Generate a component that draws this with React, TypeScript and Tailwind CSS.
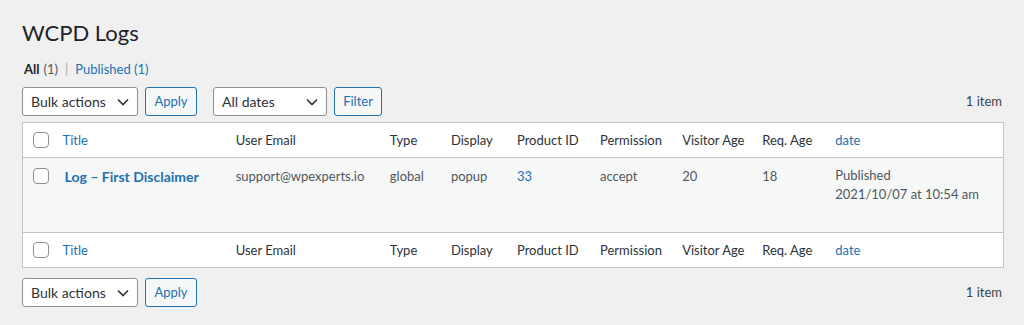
import React from "react";

const Chevron = () => (
  <svg width="12" height="8" viewBox="0 0 12 8" className="absolute right-[8px] top-1/2 -translate-y-1/2">
    <path d="M1 1.5l5 5 5-5" fill="none" stroke="#2c3338" strokeWidth="1.6" />
  </svg>
);

const Select = ({ label, w }: { label: string; w: string }) => (
  <div className={`relative h-[29px] ${w} rounded-[3px] border border-[#8c8f94] bg-white pl-[8px] flex items-center text-[14px] text-[#2c3338]`}>
    {label}
    <Chevron />
  </div>
);

const Btn = ({ label, w }: { label: string; w: string }) => (
  <div className={`h-[29px] ${w} rounded-[3px] border border-[#2271b1] bg-[#f6f7f7] flex items-center justify-center text-[13px] text-[#2271b1]`}>
    {label}
  </div>
);

const Check = () => (
  <div className="w-[16px] h-[16px] rounded-[4px] border border-[#8c8f94] bg-white" />
);

const HeadRow = () => (
  <tr className="h-[35px] bg-white text-[#2c3338] text-[13px] whitespace-nowrap">
    <td className="pl-[10px] align-middle"><Check /></td>
    <td className="px-[8px] pt-[2px] text-[#2271b1]">Title</td>
    <td className="px-[8px] pt-[2px]">User Email</td>
    <td className="px-[8px] pt-[2px]">Type</td>
    <td className="px-[8px] pt-[2px]">Display</td>
    <td className="px-[8px] pt-[2px]">Product ID</td>
    <td className="px-[8px] pt-[2px]">Permission</td>
    <td className="px-[8px] pt-[2px]">Visitor Age</td>
    <td className="px-[8px] pt-[2px]">Req. Age</td>
    <td className="px-[8px] pt-[2px] text-[#2271b1]">date</td>
  </tr>
);

export default function App() {
  return (
    <div className="min-h-screen bg-[#f0f0f1] px-[22px] pt-[18px] text-[#3c434a]" style={{ fontFamily: 'Lato, "Open Sans", sans-serif' }}>
      <h1 className="text-[22px] leading-[30px] text-[#1d2327] font-normal">WCPD Logs</h1>
      <div className="mt-[12px] h-[20px] flex items-center text-[13px] text-[#50575e] pl-[2px]">
        <span className="font-bold text-[#1d2327]">All</span>
        <span className="ml-[4px]">(1)</span>
        <span className="mx-[7px] text-[#a7aaad]">|</span>
        <span className="text-[#2271b1]">Published <span>(1)</span></span>
      </div>
      <div className="mt-[7px] flex items-center justify-between">
        <div className="flex items-center">
          <Select label="Bulk actions" w="w-[116px]" />
          <div className="ml-[7px]"><Btn label="Apply" w="w-[52px]" /></div>
          <div className="ml-[16px]"><Select label="All dates" w="w-[114px]" /></div>
          <div className="ml-[7px]"><Btn label="Filter" w="w-[48px]" /></div>
        </div>
        <div className="text-[13px] text-[#3c434a]">1 item</div>
      </div>
      <table className="mt-[6px] w-[982px] table-fixed border border-[#c3c4c7] border-collapse">
        <colgroup>
          <col className="w-[32px]" />
          <col className="w-[173px]" />
          <col className="w-[154px]" />
          <col className="w-[61px]" />
          <col className="w-[66px]" />
          <col className="w-[83px]" />
          <col className="w-[82px]" />
          <col className="w-[80px]" />
          <col className="w-[73px]" />
          <col className="w-[176px]" />
        </colgroup>
        <thead className="border-b border-[#c3c4c7]">
          <HeadRow />
        </thead>
        <tbody>
          <tr className="h-[75px] bg-[#f6f7f7] text-[13px] text-[#50575e] align-top whitespace-nowrap">
            <td className="pl-[10px] pt-[10px]"><Check /></td>
            <td className="pl-[10px] pr-[8px] pt-[8px] font-bold text-[14px] text-[#2271b1]">Log – First Disclaimer</td>
            <td className="px-[8px] pt-[9px]">support@wpexperts.io</td>
            <td className="px-[8px] pt-[9px]">global</td>
            <td className="px-[8px] pt-[9px]">popup</td>
            <td className="px-[8px] pt-[9px] text-[#2271b1]">33</td>
            <td className="px-[8px] pt-[9px]">accept</td>
            <td className="px-[8px] pt-[9px]">20</td>
            <td className="px-[8px] pt-[9px]">18</td>
            <td className="px-[8px] pt-[8px] leading-[19px]">Published<br />2021/10/07 at 10:54 am</td>
          </tr>
        </tbody>
        <tfoot className="border-t border-[#c3c4c7]">
          <HeadRow />
        </tfoot>
      </table>
      <div className="mt-[10px] flex items-center justify-between">
        <div className="flex items-center">
          <Select label="Bulk actions" w="w-[116px]" />
          <div className="ml-[7px]"><Btn label="Apply" w="w-[52px]" /></div>
        </div>
        <div className="text-[13px] text-[#3c434a]">1 item</div>
      </div>
    </div>
  );
}
